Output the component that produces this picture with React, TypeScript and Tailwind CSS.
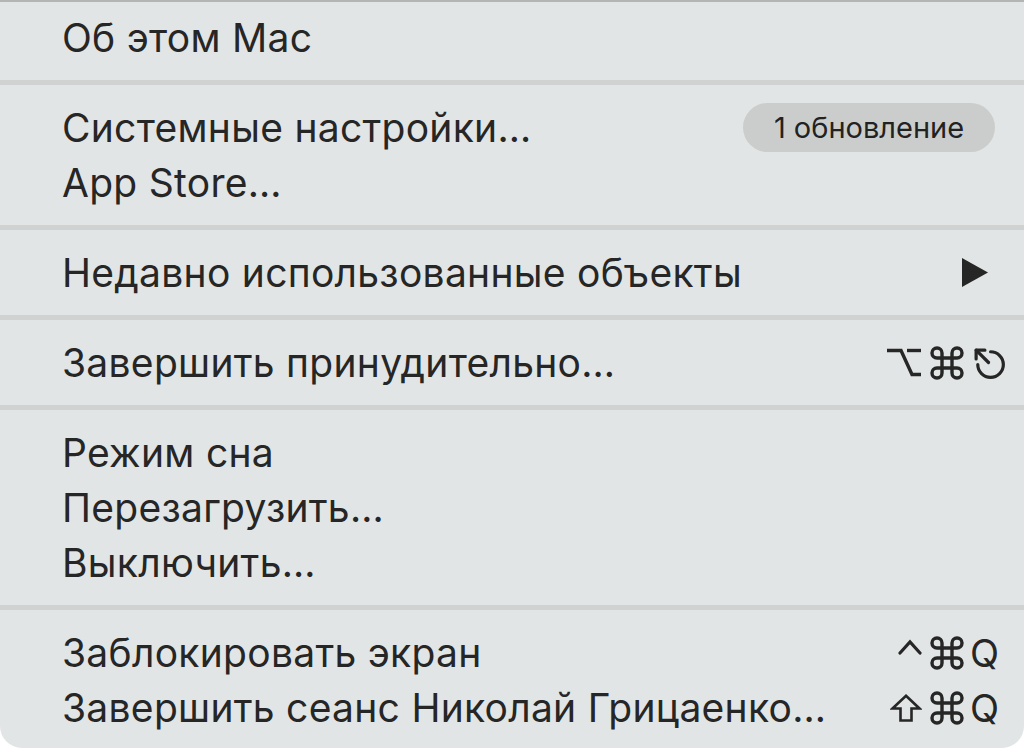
import React from "react";

const font = { fontFamily: "Inter, 'Noto Sans', sans-serif" };
const INK = "#262626";

function Row({ children, right }: { children: React.ReactNode; right?: React.ReactNode }) {
  return (
    <div className="flex h-[55px] items-center justify-between pl-[62px] pr-[19px]">
      <span className="text-[39px] leading-none tracking-[0.28px] text-[#262626]">{children}</span>
      {right}
    </div>
  );
}

function Sep() {
  return (
    <div className="py-[15px]">
      <div className="h-[5px] bg-[#d0d2d2]" />
    </div>
  );
}

function Dots() {
  return <span className="tracking-[1.5px]">…</span>;
}

function OptGlyph() {
  return (
    <svg width="36" height="31" viewBox="0 0 36 31" fill="none" stroke={INK} strokeWidth="3.4" strokeLinecap="butt" strokeLinejoin="miter">
      <path d="M1 3.5 H15 L26 27.5 H35" />
      <path d="M21 3.5 H35" />
    </svg>
  );
}

function CmdGlyph() {
  return (
    <svg width="30" height="30" viewBox="3 3 18 18" fill="none" stroke={INK} strokeWidth="2.05" strokeLinecap="round" strokeLinejoin="round" style={{ overflow: "visible" }}>
      <path d="M15 6v12a3 3 0 1 0 3-3H6a3 3 0 1 0 3 3V6a3 3 0 1 0-3 3h12a3 3 0 1 0-3-3" />
    </svg>
  );
}

function EscGlyph() {
  return (
    <svg width="33" height="33" viewBox="0 0 32 32" fill="none" stroke={INK} strokeWidth="3.1" strokeLinecap="round" strokeLinejoin="round">
      <path d="M5.6 18 A12.4 12.4 0 1 0 18 5.6" />
      <path d="M16 16 L4 4" />
      <path d="M4 12.5 L4 4 L12.5 4" />
    </svg>
  );
}

function CtrlGlyph() {
  return (
    <svg width="24" height="16" viewBox="0 0 24 16" fill="none" stroke={INK} strokeWidth="3.2" strokeLinecap="round" strokeLinejoin="miter">
      <path d="M2 14 L12 3 L22 14" />
    </svg>
  );
}

function ShiftGlyph() {
  return (
    <svg width="32" height="28" viewBox="0 0 32 28" fill="none" stroke={INK} strokeWidth="2.6" strokeLinejoin="miter">
      <path d="M16 1.8 L29.5 14.5 H21.5 V26.5 H10.5 V14.5 H2.5 Z" />
    </svg>
  );
}

function Keys({ a, c }: { a: React.ReactNode; c: React.ReactNode }) {
  return (
    <div className="flex h-[34px] items-center">
      <div className="flex w-[36px] justify-end">{a}</div>
      <div className="ml-[10px] flex w-[30px] justify-center">
        <CmdGlyph />
      </div>
      <div className="ml-[8px] flex w-[35px] justify-start">{c}</div>
    </div>
  );
}

function Q() {
  return <span className="text-[38px] leading-none text-[#262626]">Q</span>;
}

export default function App() {
  return (
    <div className="w-[1024px] h-[748px] overflow-hidden bg-white" style={font}>
      <div className="h-[748px] bg-[#e2e5e5] rounded-b-[22px] border-t-[2px] border-[#b3b5b5] pt-[8px]">
        <Row>Об этом Mac</Row>
        <Sep />
        <Row
          right={
            <div className="mr-[10px] flex h-[49px] w-[252px] items-center justify-center rounded-full bg-[#cbcdcd] text-[29px] text-[#222]">
              1 обновление
            </div>
          }
        >
          Системные настройки<Dots />
        </Row>
        <Row>
          App Store<Dots />
        </Row>
        <Sep />
        <Row
          right={
            <svg width="26" height="29" viewBox="0 0 26 29" className="mr-[17px]">
              <path d="M0 0 L26 14.5 L0 29 Z" fill={INK} />
            </svg>
          }
        >
          Недавно использованные объекты
        </Row>
        <Sep />
        <Row
          right={
            <Keys
              a={<OptGlyph />}
              c={
                <div className="ml-[2px]">
                  <EscGlyph />
                </div>
              }
            />
          }
        >
          Завершить принудительно<Dots />
        </Row>
        <Sep />
        <Row>Режим сна</Row>
        <Row>
          Перезагрузить<Dots />
        </Row>
        <Row>
          Выключить<Dots />
        </Row>
        <Sep />
        <Row
          right={
            <Keys
              a={
                <div className="mb-[12px]">
                  <CtrlGlyph />
                </div>
              }
              c={<Q />}
            />
          }
        >
          Заблокировать экран
        </Row>
        <Row right={<Keys a={<ShiftGlyph />} c={<Q />} />}>
          Завершить сеанс Николай Грицаенко<Dots />
        </Row>
      </div>
    </div>
  );
}
